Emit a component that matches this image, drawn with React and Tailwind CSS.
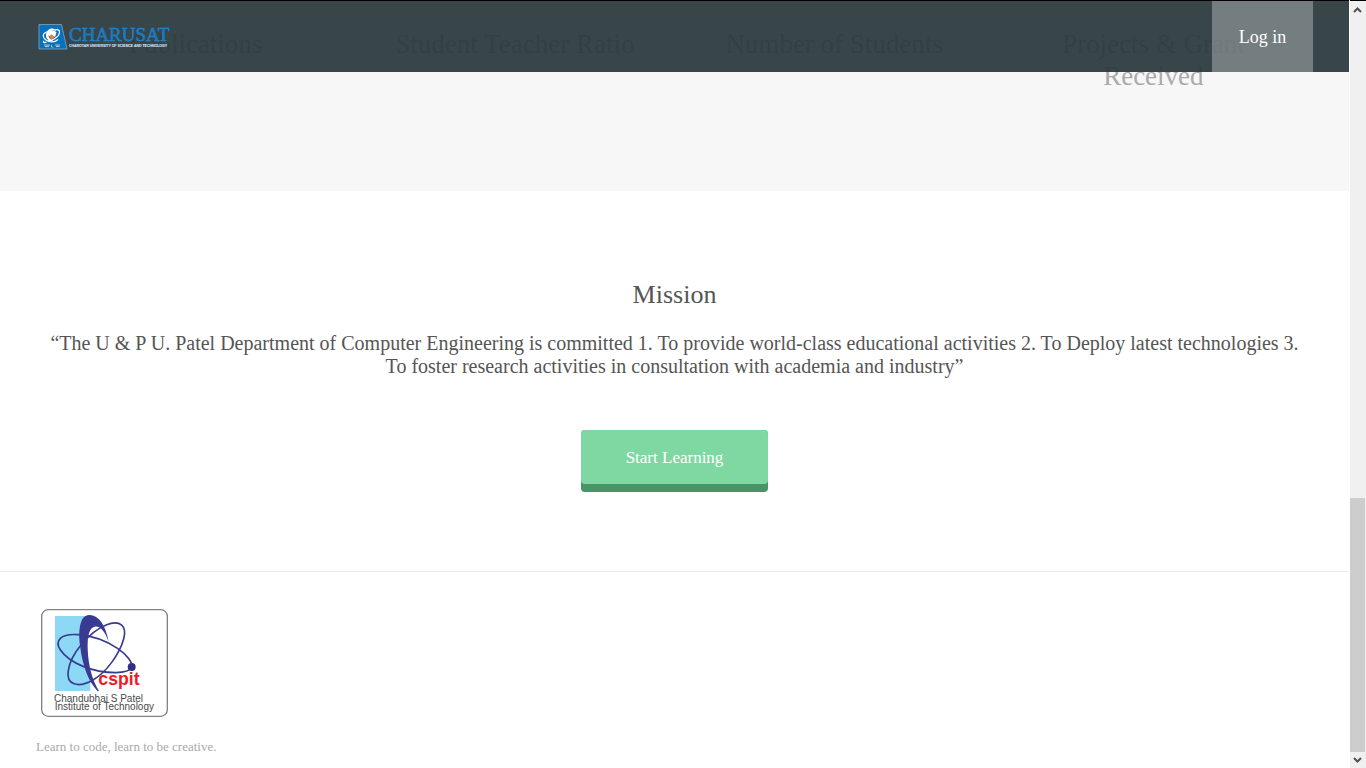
const stats = [
  'Publications',
  'Student Teacher Ratio',
  'Number of Students',
  'Projects & Grant Received',
];

function CharusatLogo() {
  return (
    <svg className="block h-7 w-34" viewBox="0 0 272 56" role="img" aria-label="Charusat">
      <path d="M2 3H47L58 52H2Z" fill="#0870bd" stroke="#8aa9b9" strokeWidth="1.5" />
      <g fill="none" stroke="#fff" strokeWidth="2.500">
        <path d="M20 35C27 37 42 28 43 19C44 13 37 12 33 15" />
        <path d="M22 17C12 18 8 24 12 30C17 38 32 41 40 33" />
        <path d="M12 36C9 39 13 40 17 38" />
      </g>
      <path d="M16 24C17 12 28 7 36 14C27 13 20 19 21 27C23 32 27 34 31 36C23 37 15 32 16 24Z" fill="#fff" />
      <path d="M20 20C24 12 33 13 37 19L34 28L27 25L21 27Z" fill="#fff" />
      <path d="M23 25L28 23L33 27L30 33L24 30Z" fill="#f07f2d" />
      <path d="M12 44H24M14 47H22M27 44V48H31M34 44H44M36 47H43" stroke="#a9cde6" strokeWidth="2" />
      <text x="62" y="36" fontFamily="Liberation Serif, serif" fontSize="38" fill="#0878c8" stroke="#2a86c6" strokeWidth="1">CHARUSAT</text>
      <text x="62" y="47" fontFamily="Liberation Sans, sans-serif" fontSize="7" fontWeight="700" fill="#c3dced" stroke="#c3dced" strokeWidth="0.3">CHAROTAR UNIVERSITY OF SCIENCE AND TECHNOLOGY</text>
    </svg>
  );
}

function CspitLogo() {
  return (
    <svg className="block h-28 w-33" viewBox="0 0 396 336" role="img" aria-label="Chandubhai S Patel Institute of Technology">
      <rect x="17" y="8" width="377" height="320" rx="20" fill="#fff" stroke="#828282" strokeWidth="4" />
      <path d="M57 27H163V252H57Z" fill="#8dd8f5" />
      <path d="M153 66Q195 40 208 90L205 190L168 225L151 150Z" fill="#fff" />
      <g fill="none" stroke="#383b91" strokeWidth="5" transform="translate(3 0)">
        <path d="M284 182C292 151 213 90 124 83C71 79 51 101 71 130C97 169 169 197 236 197C263 196 280 190 284 182Z" />
        <path d="M94 190C100 144 154 75 209 53C250 38 271 58 260 96C247 142 208 196 168 219C124 244 86 234 94 190Z" />
      </g>
      <path d="M189 252C170 222 157 178 155 126C154 86 160 62 176 59C193 56 206 72 218 104C208 54 190 25 160 24C133 23 126 67 132 115C139 177 158 224 185 253Z" fill="#383b91" />
      <circle cx="287" cy="180" r="12" fill="#312f86" />
      <text x="187" y="235" fontFamily="Liberation Sans Narrow, Liberation Sans, sans-serif" fontSize="53" fontWeight="700" fill="#ed1c24">cspit</text>
      <text x="54" y="284" fontFamily="Liberation Sans, sans-serif" fontSize="30" fill="#4a4a4a">Chandubhai S Patel</text>
      <text x="56" y="310" fontFamily="Liberation Sans, sans-serif" fontSize="30" fill="#4a4a4a">Institute of Technology</text>
    </svg>
  );
}

function Header() {
  return (
    <header className="absolute inset-x-0 top-0 flex h-18 items-stretch justify-between border-t border-black bg-[rgba(42,56,59,0.93)] px-9">
      <a href="#home" className="flex items-center pl-0.5">
        <CharusatLogo />
      </a>
      <a href="#login" className="flex w-[101px] items-center justify-center bg-white/30 text-lg text-white">
        Log in
      </a>
    </header>
  );
}

function ScrollBar() {
  return (
    <div aria-hidden="true" className="ml-px flex w-4 shrink-0 flex-col border-t border-black bg-[#f0f0f0]">
      <svg className="h-4 w-4" viewBox="0 0 16 16" fill="none" stroke="#505050" strokeWidth="2">
        <path d="M4 11L7.500 7.500L11 11" />
      </svg>
      <div className="flex grow flex-col">
        <div className="grow-[480]" />
        <div className="mr-px grow-[254] bg-[#cdcdcd]" />
      </div>
      <svg className="h-4 w-4" viewBox="0 0 16 16" fill="none" stroke="#505050" strokeWidth="2">
        <path d="M4 6L7.500 9.500L11 6" />
      </svg>
    </div>
  );
}

export default function App() {
  return (
    <div className="flex min-h-screen bg-white font-['Liberation_Serif',serif]">
      <div className="relative min-w-0 grow">
        <Header />
        <main>
          <section className="grid grid-cols-4 bg-[#f7f7f7] px-9 pt-7 pb-[99px] text-center text-[27px] leading-8 text-[#aaaaaa]">
            {stats.map((label) => (
              <h3 key={label} className="px-10">{label}</h3>
            ))}
          </section>
          <section className="flex flex-col items-center border-b border-[#ececec] px-10 pt-22 pb-[79px] text-center text-[#555555]">
            <h2 className="text-[26px] leading-8">Mission</h2>
            <p className="mt-[21px] text-xl leading-[23px]">
              “The U &amp; P U. Patel Department of Computer Engineering is committed 1. To provide world-class educational activities 2. To Deploy latest technologies 3. To foster research activities in consultation with academia and industry”
            </p>
            <button type="button" className="mt-13 h-[62px] w-[187px] rounded bg-[#499467] pb-2 text-[17px] text-white">
              <span className="flex h-full items-center justify-center rounded bg-[#7fd8a2] pt-0.5">Start Learning</span>
            </button>
          </section>
        </main>
        <footer className="px-9 pt-[35px]">
          <CspitLogo />
          <p className="mt-5 text-[13px] leading-4 text-[#aaaaaa]">Learn to code, learn to be creative.</p>
        </footer>
      </div>
      <ScrollBar />
    </div>
  );
}
